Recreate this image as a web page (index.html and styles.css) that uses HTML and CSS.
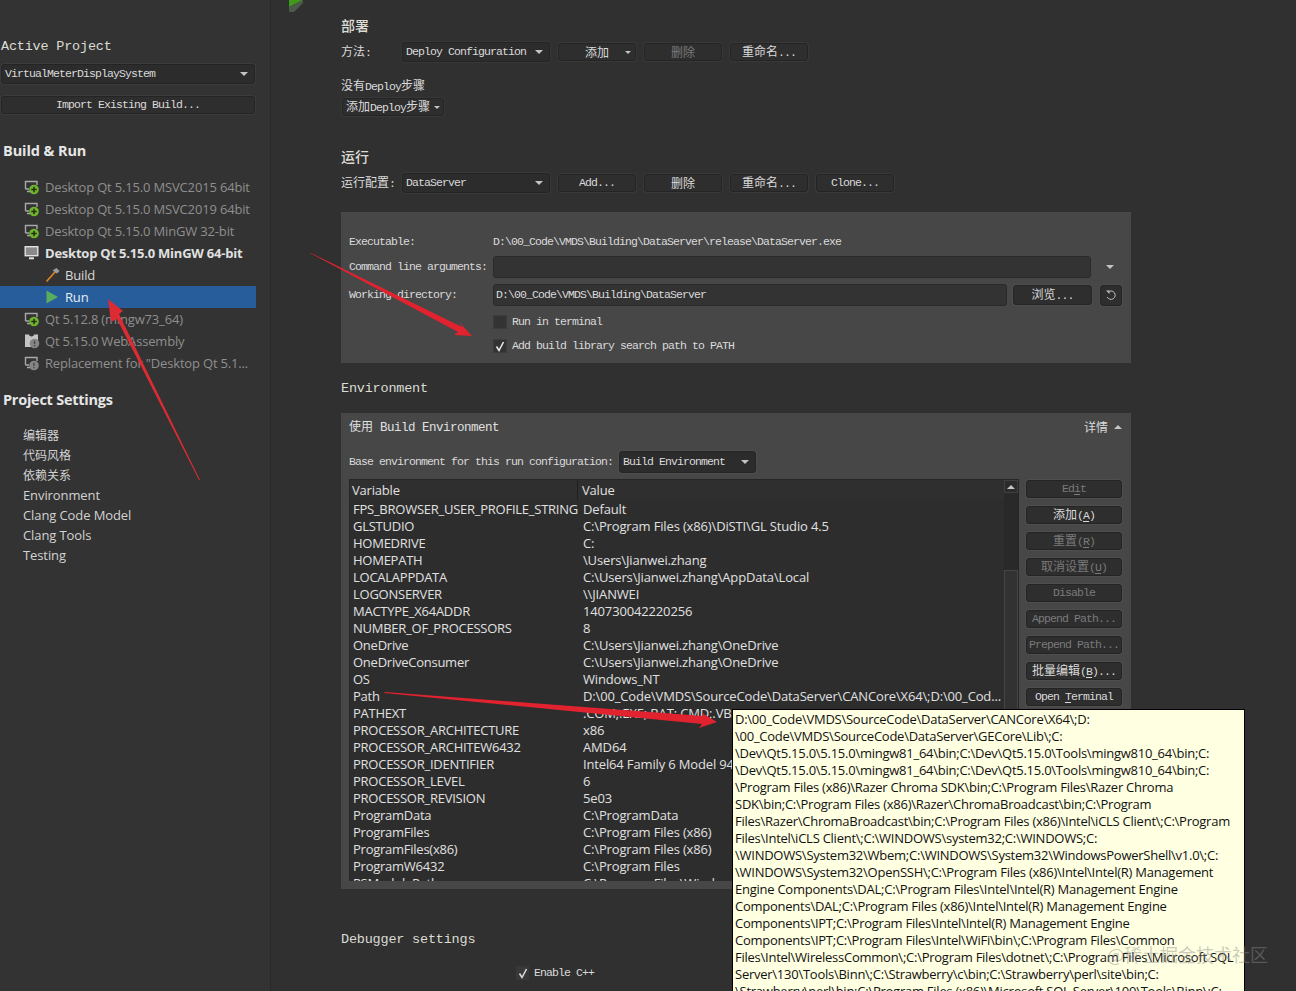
FILE: index.html
```html
<!DOCTYPE html>
<html lang="zh">
<head>
<meta charset="utf-8">
<title>Projects</title>
<link rel="stylesheet" href="styles.css">
</head>
<body>
<svg class="defs" width="0" height="0">
  <symbol id="kit" viewBox="0 0 16 16">
    <path d="M1.5 10V2.5H13V6" fill="none" stroke="#a8a8a8" stroke-width="1.4"/>
    <path d="M1.5 10H5M3 12.5H6" fill="none" stroke="#a8a8a8" stroke-width="1.4"/>
    <circle cx="10" cy="10.5" r="4.8" fill="#6fb52e"/>
    <path d="M10 7.8V13.2M7.3 10.5H12.7" stroke="#20300f" stroke-width="1.5"/>
  </symbol>
  <symbol id="warn" viewBox="0 0 16 16">
    <path d="M1.5 10V2.5H13V6" fill="none" stroke="#a8a8a8" stroke-width="1.4"/>
    <path d="M1.5 10H5M3 12.5H6" fill="none" stroke="#a8a8a8" stroke-width="1.4"/>
    <circle cx="10" cy="10.5" r="4.8" fill="#858585"/>
    <path d="M10 7.8V11M10 12V13.2" stroke="#444" stroke-width="1.3"/>
  </symbol>
  <symbol id="wasm" viewBox="0 0 16 16">
    <path d="M1 1.5H5C5 4 10 4 10 1.5H14V8H8V14H1Z" fill="#c4c4c4"/>
    <circle cx="10.5" cy="10.5" r="4.8" fill="#858585"/>
    <path d="M10.5 7.8V11M10.5 12V13.2" stroke="#444" stroke-width="1.3"/>
  </symbol>
  <symbol id="mon" viewBox="0 0 16 16">
    <rect x="1.2" y="1.7" width="12.6" height="9" fill="#8a8a8a" stroke="#e2e2e2" stroke-width="1.4"/>
    <path d="M5 13.3H10" stroke="#e2e2e2" stroke-width="2"/>
  </symbol>
</svg>
<div class="app">
  <aside class="side">
    <div class="side-title">Active Project</div>
    <div class="combo side-combo"><span>VirtualMeterDisplaySystem</span></div>
    <div class="btn side-import"><span>Import Existing Build...</span></div>
    <h2 class="side-h first">Build &amp; Run</h2>
    <ul class="kits">
      <li class="kit dim"><svg class="ico"><use href="#kit"/></svg>Desktop Qt 5.15.0 MSVC2015 64bit</li>
      <li class="kit dim"><svg class="ico"><use href="#kit"/></svg>Desktop Qt 5.15.0 MSVC2019 64bit</li>
      <li class="kit dim"><svg class="ico"><use href="#kit"/></svg>Desktop Qt 5.15.0 MinGW 32-bit</li>
      <li class="kit active"><svg class="ico"><use href="#mon"/></svg>Desktop Qt 5.15.0 MinGW 64-bit</li>
      <li class="kit child"><svg class="ico" viewBox="0 0 16 16"><path d="M1.5 14.5L10.5 4.5" stroke="#d9822b" stroke-width="1.8"/><path d="M7.5 3.5L11.5 1L14.5 4L12 6.5Z" fill="#9c9c9c"/></svg>Build</li>
      <li class="kit child sel"><svg class="ico" viewBox="0 0 16 16"><path d="M1.5 1.5L13 8L1.5 14.5Z" fill="#59ad5f"/></svg>Run</li>
      <li class="kit dim"><svg class="ico"><use href="#kit"/></svg>Qt 5.12.8 (mingw73_64)</li>
      <li class="kit dim"><svg class="ico"><use href="#wasm"/></svg>Qt 5.15.0 WebAssembly</li>
      <li class="kit dim"><svg class="ico"><use href="#warn"/></svg>Replacement for "Desktop Qt 5.1...</li>
    </ul>
    <h2 class="side-h second">Project Settings</h2>
    <ul class="settings">
      <li class="cj">编辑器</li>
      <li class="cj">代码风格</li>
      <li class="cj">依赖关系</li>
      <li>Environment</li>
      <li>Clang Code Model</li>
      <li>Clang Tools</li>
      <li>Testing</li>
    </ul>
  </aside>

  <main class="main">
    <h3 class="sec-h cjk-h">部署</h3>
    <div class="row r1">
      <span class="row-label"><span class="c">方法</span>:</span>
      <div class="combo w148"><span>Deploy Configuration</span></div>
      <div class="btn w78 small split"><span class="c">添加</span></div>
      <div class="btn w78 small off"><span class="c">删除</span></div>
      <div class="btn w78 small"><span><span class="c">重命名</span>...</span></div>
    </div>
    <div class="note"><span class="c">没有</span>Deploy<span class="c">步骤</span></div>
    <div class="btn add-step"><span><span class="c">添加</span>Deploy<span class="c">步骤</span></span></div>
    <h3 class="sec-h cjk-h run-h">运行</h3>
    <div class="row r1">
      <span class="row-label"><span class="c">运行配置</span>:</span>
      <div class="combo w148"><span>DataServer</span></div>
      <div class="btn w78 small"><span>Add...</span></div>
      <div class="btn w78 small"><span class="c">删除</span></div>
      <div class="btn w78 small"><span><span class="c">重命名</span>...</span></div>
      <div class="btn w78 small"><span>Clone...</span></div>
    </div>

    <section class="panel p-run">
      <div class="prow exec"><span class="plabel">Executable:</span><span class="pval">D:\00_Code\VMDS\Building\DataServer\release\DataServer.exe</span></div>
      <div class="prow args"><span class="plabel">Command line arguments:</span><div class="input w598"></div><i class="caret caret-args"></i></div>
      <div class="prow work"><span class="plabel">Working directory:</span><div class="input w514">D:\00_Code\VMDS\Building\DataServer</div><div class="btn browse"><span><span class="c">浏览</span>...</span></div><div class="btn reset"><svg width="12" height="12" viewBox="0 0 12 12"><path d="M3 3.2A4.2 4.2 0 1 1 2.2 8" fill="none" stroke="#c0c0c0" stroke-width="1"/><path d="M1 1.5H4.5V5Z" fill="#c0c0c0"/></svg></div></div>
      <div class="prow check c1"><span class="plabel"></span><span class="box"></span><span>Run in terminal</span></div>
      <div class="prow check c2"><span class="plabel"></span><span class="box"><svg width="14" height="14" viewBox="0 0 14 14"><path d="M3.5 7.5L6 11.5L10.5 3" fill="none" stroke="#e8e8e8" stroke-width="1.6"/></svg></span><span>Add build library search path to PATH</span></div>
    </section>

    <h3 class="sec-h env-h">Environment</h3>

    <section class="panel p-env">
      <div class="env-title"><span class="bright"><span class="c">使用</span> Build Environment</span><span class="detail"><span class="c">详情</span><i class="caret up"></i></span></div>
      <div class="base"><span>Base environment for this run configuration:</span><div class="combo w137"><span>Build Environment</span></div></div>
      <div class="env-body">
        <div class="table">
          <div class="tmain">
            <div class="thead"><span class="th first">Variable</span><span class="th second">Value</span></div>
            <dl class="trow"><dt>FPS_BROWSER_USER_PROFILE_STRING</dt><dd>Default</dd></dl>
            <dl class="trow"><dt>GLSTUDIO</dt><dd>C:\Program Files (x86)\DiSTI\GL Studio 4.5</dd></dl>
            <dl class="trow"><dt>HOMEDRIVE</dt><dd>C:</dd></dl>
            <dl class="trow"><dt>HOMEPATH</dt><dd>\Users\Jianwei.zhang</dd></dl>
            <dl class="trow"><dt>LOCALAPPDATA</dt><dd>C:\Users\Jianwei.zhang\AppData\Local</dd></dl>
            <dl class="trow"><dt>LOGONSERVER</dt><dd>\\JIANWEI</dd></dl>
            <dl class="trow"><dt>MACTYPE_X64ADDR</dt><dd>140730042220256</dd></dl>
            <dl class="trow"><dt>NUMBER_OF_PROCESSORS</dt><dd>8</dd></dl>
            <dl class="trow"><dt>OneDrive</dt><dd>C:\Users\Jianwei.zhang\OneDrive</dd></dl>
            <dl class="trow"><dt>OneDriveConsumer</dt><dd>C:\Users\Jianwei.zhang\OneDrive</dd></dl>
            <dl class="trow"><dt>OS</dt><dd>Windows_NT</dd></dl>
            <dl class="trow"><dt>Path</dt><dd>D:\00_Code\VMDS\SourceCode\DataServer\CANCore\X64\;D:\00_Cod...</dd></dl>
            <dl class="trow"><dt>PATHEXT</dt><dd>.COM;.EXE;.BAT;.CMD;.VBS;.VBE;.JS</dd></dl>
            <dl class="trow"><dt>PROCESSOR_ARCHITECTURE</dt><dd>x86</dd></dl>
            <dl class="trow"><dt>PROCESSOR_ARCHITEW6432</dt><dd>AMD64</dd></dl>
            <dl class="trow"><dt>PROCESSOR_IDENTIFIER</dt><dd>Intel64 Family 6 Model 94</dd></dl>
            <dl class="trow"><dt>PROCESSOR_LEVEL</dt><dd>6</dd></dl>
            <dl class="trow"><dt>PROCESSOR_REVISION</dt><dd>5e03</dd></dl>
            <dl class="trow"><dt>ProgramData</dt><dd>C:\ProgramData</dd></dl>
            <dl class="trow"><dt>ProgramFiles</dt><dd>C:\Program Files (x86)</dd></dl>
            <dl class="trow"><dt>ProgramFiles(x86)</dt><dd>C:\Program Files (x86)</dd></dl>
            <dl class="trow"><dt>ProgramW6432</dt><dd>C:\Program Files</dd></dl>
            <dl class="trow"><dt>PSModulePath</dt><dd>C:\Program Files\WindowsPowerShell</dd></dl>
          </div>
          <div class="sb"><div class="sb-up"><i class="caret up"></i></div><div class="sb-track"></div><div class="sb-thumb"></div></div>
        </div>
        <div class="actions">
          <div class="btn act off"><span>Ed<u>i</u>t</span></div>
          <div class="btn act"><span><span class="c">添加</span>(<u>A</u>)</span></div>
          <div class="btn act off"><span><span class="c">重置</span>(<u>R</u>)</span></div>
          <div class="btn act off"><span><span class="c">取消设置</span>(<u>U</u>)</span></div>
          <div class="btn act off"><span>Disable</span></div>
          <div class="btn act off"><span>Append Path...</span></div>
          <div class="btn act off"><span>Prepend Path...</span></div>
          <div class="btn act"><span><span class="c">批量编辑</span>(<u>B</u>)...</span></div>
          <div class="btn act"><span>Open <u>T</u>erminal</span></div>
        </div>
      </div>
    </section>

    <h3 class="sec-h dbg-h">Debugger settings</h3>
    <div class="enable"><span class="box flat"><svg width="14" height="14" viewBox="0 0 14 14"><path d="M3.5 7.5L6 11.5L10.5 3" fill="none" stroke="#d8d8d8" stroke-width="1.6"/></svg></span><span>Enable C++</span></div>
  </main>
</div>

<div class="tooltip">D:\00_Code\VMDS\SourceCode\DataServer\CANCore\X64\;D:<br>\00_Code\VMDS\SourceCode\DataServer\GECore\Lib\;C:<br>\Dev\Qt5.15.0\5.15.0\mingw81_64\bin;C:\Dev\Qt5.15.0\Tools\mingw810_64\bin;C:<br>\Dev\Qt5.15.0\5.15.0\mingw81_64\bin;C:\Dev\Qt5.15.0\Tools\mingw810_64\bin;C:<br>\Program Files (x86)\Razer Chroma SDK\bin;C:\Program Files\Razer Chroma<br>SDK\bin;C:\Program Files (x86)\Razer\ChromaBroadcast\bin;C:\Program<br>Files\Razer\ChromaBroadcast\bin;C:\Program Files (x86)\Intel\iCLS Client\;C:\Program<br>Files\Intel\iCLS Client\;C:\WINDOWS\system32;C:\WINDOWS;C:<br>\WINDOWS\System32\Wbem;C:\WINDOWS\System32\WindowsPowerShell\v1.0\;C:<br>\WINDOWS\System32\OpenSSH\;C:\Program Files (x86)\Intel\Intel(R) Management<br>Engine Components\DAL;C:\Program Files\Intel\Intel(R) Management Engine<br>Components\DAL;C:\Program Files (x86)\Intel\Intel(R) Management Engine<br>Components\IPT;C:\Program Files\Intel\Intel(R) Management Engine<br>Components\IPT;C:\Program Files\Intel\WiFi\bin\;C:\Program Files\Common<br>Files\Intel\WirelessCommon\;C:\Program Files\dotnet\;C:\Program Files\Microsoft SQL<br>Server\130\Tools\Binn\;C:\Strawberry\c\bin;C:\Strawberry\perl\site\bin;C:<br>\Strawberry\perl\bin;C:\Program Files (x86)\Microsoft SQL Server\100\Tools\Binn\;C:</div>

<svg class="marks" width="1296" height="991" viewBox="0 0 1296 991">
  <path d="M289 0H303L289 7Z" fill="#3f9a1c"/>
  <path d="M289 7L303 0V3L294 12H289Z" fill="#4b5a48"/>
  <path d="M200 480L199 480L117 319L111 322L108 299L123 311L119 314Z" fill="#dd2b34"/>
  <path d="M310 253L311 253L462 327L460 323L472 336L454 335L458 332Z" fill="#e0232f"/>
  <path d="M384 693L385 692L703 716L702 713L717 722L699 728L702 724Z" fill="#e0232f"/>
</svg>
<div class="watermark">@稀土掘金技术社区</div>
</body>
</html>
```
FILE: styles.css
```css
* { box-sizing: border-box; }
html, body { margin: 0; height: 991px; overflow: hidden; }
body {
  position: relative;
  background: #303030;
  color: #dadada;
  font-family: "Liberation Mono", "Noto Sans CJK SC", monospace;
  font-size: 11.5px;
  line-height: 14px;
  letter-spacing: -0.9px;
}
.defs { position: absolute; }
ul, dl, dd, h2, h3 { margin: 0; padding: 0; list-style: none; font-weight: normal; }
.c {
  font-size: 12px;
  line-height: 1;
  letter-spacing: 0;
  font-family: "Noto Sans CJK SC", sans-serif;
}
u { text-underline-offset: 2px; }

.app { display: flex; height: 991px; overflow: hidden; }

/* sidebar */
.side {
  width: 271px;
  flex: none;
  padding: 37px 14px 0 0;
  background: #333333;
  border-right: 1px solid #2a2a2a;
}
.side-title {
  height: 18px;
  line-height: 20px;
  padding-left: 1px;
  font-size: 13.5px;
  letter-spacing: -0.2px;
  color: #dcdcd4;
}
.side-combo { margin: 9px 0 0 1px; width: 254px; }
.side-import { margin: 12px 0 0 1px; width: 254px; }
.side-h {
  height: 20px;
  line-height: 20px;
  padding-left: 3px;
  font-family: "Open Sans", sans-serif;
  font-size: 14.5px;
  font-weight: 700;
  letter-spacing: -0.1px;
  color: #e6e6e6;
}
.side-h.first { margin-top: 27px; }
.side-h.second { margin-top: 16px; letter-spacing: -0.25px; }
.kits { margin-top: 15px; }
.kit {
  display: flex;
  align-items: center;
  height: 22px;
  padding-left: 24px;
  font-family: "Open Sans", sans-serif;
  font-size: 13px;
  letter-spacing: -0.17px;
  white-space: nowrap;
  color: #d8d8d8;
}
.kit.dim { color: #8f8f8f; }
.kit.active { font-weight: 700; color: #e0e0e0; letter-spacing: -0.22px; }
.kit.child { padding-left: 45px; }
.kit.sel { background: #275d9a; color: #e6eef6; }
.ico { width: 16px; height: 16px; margin-right: 5px; flex: none; }
.kit.child .ico { margin-right: 4px; }
.settings { margin-top: 15px; }
.settings li {
  height: 20px;
  line-height: 20px;
  padding-left: 23px;
  font-family: "Open Sans", "Noto Sans CJK SC", sans-serif;
  font-size: 13px;
  letter-spacing: -0.1px;
  color: #d2d2d2;
}
.settings li.cj { font-family: "Noto Sans CJK SC", sans-serif; font-size: 12px; letter-spacing: 0; }

/* controls */
.btn, .combo {
  display: flex;
  align-items: center;
  flex: none;
  height: 18px;
  border: 1px solid #242424;
  border-radius: 3px;
  background: #2e2e2e;
  box-shadow: 0 0 0 1px rgba(255,255,255,.04);
  white-space: nowrap;
  color: #dadada;
}
.btn { justify-content: center; }
.combo { height: 20px; padding: 0 5px 0 3px; justify-content: space-between; background: #2c2c2c; }
.combo::after {
  content: "";
  border: 4px solid transparent;
  border-top: 4px solid #c4c4c4;
  border-bottom: 0;
  margin-right: 1px;
}
.btn.off { color: #7a7a7a; }
.caret {
  display: inline-block;
  border: 4px solid transparent;
  border-top: 4px solid #c4c4c4;
  border-bottom: 0;
}
.caret.up { border-top: 0; border-bottom: 4px solid #c4c4c4; }

/* main */
.main { width: 861px; padding: 16px 0 0 70px; flex: none; }
.sec-h {
  height: 20px;
  line-height: 22px;
  font-size: 13.5px;
  letter-spacing: -0.2px;
  color: #dcdcd4;
}
.cjk-h { font-family: "Noto Sans CJK SC", sans-serif; font-size: 14px; font-weight: 500; letter-spacing: 0; line-height: 18px; }
.row { display: flex; align-items: center; gap: 8px; height: 20px; }
.r1 { margin-top: 6px; }
.row-label { width: 53px; flex: none; white-space: nowrap; }
.w148 { width: 148px; }
.w78 { width: 78px; }
.w137 { width: 137px; height: 22px; }
.split { position: relative; }
.split::after {
  content: "";
  position: absolute;
  right: 4px;
  top: 7px;
  border: 3px solid transparent;
  border-top: 3px solid #c4c4c4;
  border-bottom: 0;
}
.note { height: 18px; line-height: 18px; margin-top: 16px; }
.add-step { width: 102px; margin: 2px 0 0 1px; justify-content: flex-start; padding-left: 3px; position: relative; }
.add-step::after {
  content: "";
  position: absolute;
  right: 3px;
  top: 7px;
  border: 3px solid transparent;
  border-top: 3px solid #c4c4c4;
  border-bottom: 0;
}
.run-h { margin-top: 31px; }

.panel { width: 790px; background: #474747; margin-top: 19px; }
.p-run { height: 151px; padding: 21px 9px 0 8px; }
.prow { display: flex; align-items: center; white-space: nowrap; }
.plabel { width: 144px; flex: none; }
.exec { height: 18px; }
.args { height: 22px; margin-top: 5px; }
.work { height: 22px; margin-top: 6px; }
.check { height: 14px; }
.c1 { margin-top: 9px; }
.c2 { margin-top: 10px; }
.input {
  height: 22px;
  line-height: 20px;
  padding-left: 2px;
  flex: none;
  border: 1px solid #2a2a2a;
  border-radius: 3px;
  background: #333333;
}
.w598 { width: 598px; }
.w514 { width: 514px; }
.caret-args { margin-left: 15px; }
.browse { width: 79px; height: 20px; margin-left: 6px; }
.reset { width: 22px; height: 21px; margin-left: 8px; }
.box {
  display: block;
  width: 14px;
  height: 14px;
  margin-right: 5px;
  flex: none;
  background: #333333;
  border: 1px solid #3c3c3c;
}
.box svg { display: block; margin: -1px; }
.box.flat { width: 13px; background: #383838; border: 0; }
.box.flat svg { margin: 0; }

.env-h { margin-top: 15px; }
.p-env { height: 476px; margin-top: 15px; padding: 5px 9px 0 8px; }
.env-title { display: flex; justify-content: space-between; align-items: center; height: 18px; }
.bright { color: #e0e0e0; font-size: 12.5px; letter-spacing: -0.5px; white-space: nowrap; }
.detail { display: flex; align-items: center; gap: 6px; }
.base { display: flex; align-items: center; gap: 6px; margin-top: 15px; height: 22px; white-space: nowrap; }
.env-body { display: flex; gap: 7px; margin-top: 6px; }
.table {
  display: flex;
  width: 670px;
  height: 402px;
  overflow: hidden;
  flex: none;
  background: #2d2d2d;
  border: 1px solid #262626;
  border-bottom: 0;
}
.tmain { flex: 1; min-width: 0; overflow: hidden; }
.thead {
  display: flex;
  height: 20px;
  margin-bottom: 1px;
  background: #2f2f2f;
  font-family: "Open Sans", sans-serif;
  font-size: 13px;
  letter-spacing: -0.2px;
  line-height: 20px;
  color: #e0e0e0;
}
.th.first { width: 228px; padding-left: 2px; border-right: 1px solid #1f1f1f; }
.th.second { padding-left: 4px; }
.trow {
  display: flex;
  height: 17px;
  line-height: 17px;
  font-family: "Open Sans", sans-serif;
  font-size: 13px;
  letter-spacing: -0.15px;
  white-space: nowrap;
  color: #e0e0e0;
}
.trow dt { width: 233px; padding-left: 3px; flex: none; letter-spacing: -0.25px; }
.trow dd { flex: 1; overflow: hidden; }
.sb { width: 14px; flex: none; background: #292929; }
.sb-up {
  display: flex;
  align-items: center;
  justify-content: center;
  height: 13px;
  border: 1px solid #3f3f3f;
  background: #2b2b2b;
}
.sb-track { height: 77px; }
.sb-thumb { height: 312px; background: #323232; border: 1px solid #444444; }
.actions { display: flex; flex-direction: column; gap: 8px; width: 96px; padding-top: 1px; }
.act { width: 96px; }
.dbg-h { margin-top: 40px; }
.enable {
  display: flex;
  align-items: center;
  height: 20px;
  margin: 14px 0 0 175px;
  white-space: nowrap;
}
.enable .box { margin-right: 5px; }

/* overlays */
.tooltip {
  position: absolute;
  left: 732px;
  top: 709px;
  width: 513px;
  height: 300px;
  padding: 1px 0 0 2px;
  background: #ffffe1;
  border: 1px solid #000;
  font-family: "Open Sans", sans-serif;
  font-size: 13px;
  line-height: 17px;
  letter-spacing: -0.25px;
  white-space: nowrap;
  overflow: hidden;
  color: #111;
}
.marks { position: absolute; left: 0; top: 0; pointer-events: none; }
.watermark {
  position: absolute;
  right: 28px;
  top: 941px;
  font-family: "Noto Sans CJK SC", sans-serif;
  font-size: 18px;
  line-height: 26px;
  letter-spacing: 0;
  color: rgba(140,140,140,.45);
  white-space: nowrap;
}
```
